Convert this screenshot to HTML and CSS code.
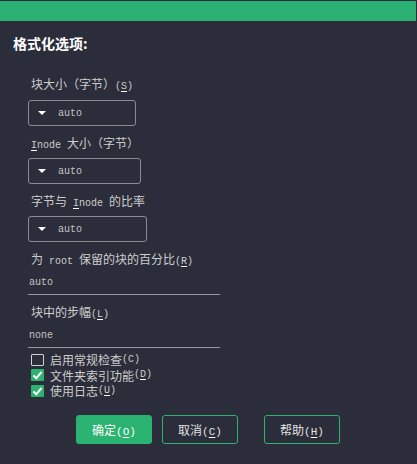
FILE: index.html
```html
<!DOCTYPE html>
<html>

<head>
    <meta charset="utf-8" />
    <title>格式化选项</title>
    <meta name="viewport" content="width=device-width, initial-scale=1">
    <link rel="stylesheet" href="styles.css">
</head>

<body>
    <div class="topbar"></div>
    <div class="dialog">
        <h2 class="title">格式化选项:</h2>

        <div class="form">
            <label class="label first">块大小（字节）<span class="mono">(<u>S</u>)</span></label>
            <div class="select w1"><span class="arrow"></span><span class="value">auto</span></div>

            <label class="label"><span class="mono"><u>I</u>node </span>大小（字节）</label>
            <div class="select w2"><span class="arrow"></span><span class="value">auto</span></div>

            <label class="label">字节与<span class="mono"> <u>I</u>node </span>的比率</label>
            <div class="select w3"><span class="arrow"></span><span class="value">auto</span></div>

            <label class="label">为<span class="mono"> root </span>保留的块的百分比<span class="mono">(<u>R</u>)</span></label>
            <div class="entry">auto</div>

            <label class="label">块中的步幅<span class="mono">(<u>L</u>)</span></label>
            <div class="entry">none</div>

            <div class="checks">
                <div class="check"><span class="box"></span>启用常规检查<span class="mono">(C)</span></div>
                <div class="check"><span class="box on"></span>文件夹索引功能<span class="mono">(<u>D</u>)</span></div>
                <div class="check"><span class="box on"></span>使用日志<span class="mono">(<u>U</u>)</span></div>
            </div>
        </div>

        <div class="buttons">
            <button class="btn primary">确定<span class="mono">(<u>O</u>)</span></button>
            <button class="btn">取消<span class="mono">(<u>C</u>)</span></button>
            <button class="btn help">帮助<span class="mono">(<u>H</u>)</span></button>
        </div>
    </div>
</body>

</html>
```

FILE: styles.css
```css
body {
    margin: 0;
    width: 417px;
    height: 464px;
    background-color: #2b2d3a;
    color: #cdcdcd;
    font-family: "Noto Sans CJK SC", sans-serif;
    font-size: 12px;
    overflow: hidden;
}

.topbar {
    height: 20px;
    margin-top: 1px;
    margin-right: 1px;
    background-color: #29b072;
}

.dialog {
    padding: 12px 0 0 0;
}

.title {
    height: 20px;
    margin: 0 0 0 13px;
    font-size: 14px;
    line-height: 20px;
    font-weight: bold;
    color: #ffffff;
}

.form {
    display: flex;
    flex-direction: column;
    align-items: flex-start;
    padding-left: 28px;
}

.mono {
    font-family: "Liberation Mono", monospace;
    font-size: 10px;
    line-height: 10px;
}

u {
    text-decoration-color: #ffffff;
    text-underline-offset: 2px;
}

.label {
    display: block;
    height: 18px;
    line-height: 18px;
    margin-top: 8px;
    padding-left: 3px;
    white-space: pre;
}

.label.first {
    margin-top: 22px;
}

.select {
    display: flex;
    align-items: center;
    box-sizing: border-box;
    height: 26px;
    margin-top: 7px;
    padding-left: 9px;
    border: 1px solid #8c8c90;
    border-radius: 3px;
}

.w1 { width: 108px; }
.w2 { width: 113px; margin-top: 6px; }
.w3 { width: 119px; margin-top: 6px; }

.arrow {
    width: 0;
    height: 0;
    border-left: 4px solid transparent;
    border-right: 4px solid transparent;
    border-top: 4px solid #ffffff;
    margin-right: 12px;
}

.value, .entry {
    font-family: "Liberation Mono", monospace;
    font-size: 10px;
    color: #c4c4c4;
}

.entry {
    box-sizing: border-box;
    width: 192px;
    height: 23px;
    line-height: 22px;
    margin-top: 4px;
    padding-left: 1px;
    border-bottom: 1px solid #9a9a9e;
}

.checks {
    margin-top: 4px;
    padding-left: 3px;
}

.check {
    display: flex;
    align-items: center;
    height: 15.5px;
    line-height: 15px;
}

.box {
    box-sizing: border-box;
    width: 13px;
    height: 12px;
    margin-right: 6px;
    border: 1px solid #d0d0d0;
    border-radius: 1px;
}

.box.on {
    border: none;
    background-color: #2bb371;
    position: relative;
}

.box.on::after {
    content: "";
    position: absolute;
    left: 4px;
    top: 1px;
    width: 3px;
    height: 7px;
    border-right: 2px solid #ffffff;
    border-bottom: 2px solid #ffffff;
    transform: rotate(40deg);
}

.buttons {
    display: flex;
    margin-top: 16px;
    padding-left: 76px;
    gap: 10px;
}

.btn {
    width: 76px;
    height: 29px;
    border: 1px solid #2bb371;
    border-radius: 3px;
    background-color: transparent;
    color: #e2e2e2;
    font-family: "Noto Sans CJK SC", sans-serif;
    font-size: 12px;
    padding: 0;
}

.btn .mono {
    font-size: 11px;
}

.btn.primary {
    background-color: #2bb371;
    color: #ffffff;
}

.btn.help {
    margin-left: 16px;
}
```
